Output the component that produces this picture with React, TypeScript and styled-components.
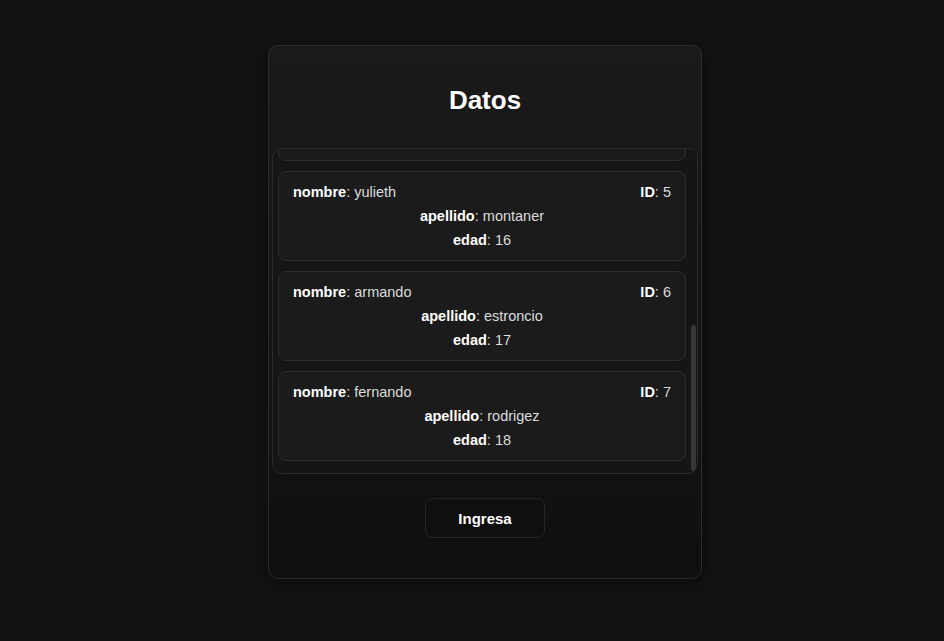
import React, { useLayoutEffect, useRef, useState } from 'react'
import styled, { createGlobalStyle } from 'styled-components'


const people: Person[] = [
    { id: 1, nombre: 'carlos', apellido: 'perez', edad: 12 },
    { id: 2, nombre: 'maria', apellido: 'gomez', edad: 13 },
    { id: 3, nombre: 'andres', apellido: 'lopez', edad: 14 },
    { id: 4, nombre: 'laura', apellido: 'martinez', edad: 15 },
    { id: 5, nombre: 'yulieth', apellido: 'montaner', edad: 16 },
    { id: 6, nombre: 'armando', apellido: 'estroncio', edad: 17 },
    { id: 7, nombre: 'fernando', apellido: 'rodrigez', edad: 18 },
]

export default function App(): JSX.Element {

    const listRef = useRef<HTMLDivElement>(null)
    const [thumb, setThumb] = useState({ top: 0, height: 0 })

    const updateThumb = () => {
        const el = listRef.current
        if (!el) return
        const track = el.clientHeight - 4
        const height = Math.max(20, track * el.clientHeight / el.scrollHeight)
        const top = 2 + (track - height) * el.scrollTop / Math.max(1, el.scrollHeight - el.clientHeight)
        setThumb({ top, height })
    }

    useLayoutEffect(() => {
        const el = listRef.current
        if (el) el.scrollTop = el.scrollHeight
        updateThumb()
    }, [])

    return (
        <>
            <GlobalStyle/>
            <Page>
                <Card>
                    <Title>Datos</Title>
                    <ListFrame>
                        <List ref={listRef} onScroll={updateThumb}>
                            {people.map(p => (
                                <Item key={p.id}>
                                    <TopRow>
                                        <span><Label>nombre</Label>: {p.nombre}</span>
                                        <span><Label>ID</Label>: {p.id}</span>
                                    </TopRow>
                                    <Row><Label>apellido</Label>: {p.apellido}</Row>
                                    <Row><Label>edad</Label>: {p.edad}</Row>
                                </Item>
                            ))}
                        </List>
                        <Thumb style={{ top: thumb.top, height: thumb.height }}/>
                    </ListFrame>
                    <Button>Ingresa</Button>
                </Card>
            </Page>
        </>
    )
}


interface Person {
    id: number
    nombre: string
    apellido: string
    edad: number
}

const GlobalStyle = createGlobalStyle`
    html, body {
        margin: 0;
        padding: 0;
        background: #121212;
        font-family: "Liberation Sans", Arial, sans-serif;
        color: #fff;
    }
    * {
        box-sizing: border-box;
    }
`

const Page = styled.div`
    min-height: 641px;
    display: flex;
    justify-content: center;
    align-items: flex-start;
    padding: 45px 0 0 26px;
`

const Card = styled.div`
    width: 434px;
    border: 1px solid #2c2c2c;
    border-radius: 10px;
    background: linear-gradient(180deg, #1a1a1a 0%, #141414 55%, #0f0f0f 100%);
    box-shadow: 0 4px 14px rgba(0, 0, 0, 0.45);
    display: flex;
    flex-direction: column;
    align-items: center;
    padding: 39px 0 40px;
`

const Title = styled.h1`
    margin: 0 0 33px;
    font-size: 26px;
    line-height: 30px;
    font-weight: 700;
    color: #fff;
`

const ListFrame = styled.div`
    position: relative;
    width: 426px;
    height: 326px;
    border: 1px solid #2a2a2a;
    border-radius: 10px;
    background: #151515;
    overflow: hidden;
`

const List = styled.div`
    height: 100%;
    overflow-y: scroll;
    scrollbar-width: none;
    padding: 10px 11px 12px 5px;
    display: flex;
    flex-direction: column;
    gap: 10px;

    &::-webkit-scrollbar {
        display: none;
    }
`

const Thumb = styled.div`
    position: absolute;
    right: 1px;
    width: 5px;
    border-radius: 3px;
    background: #363636;
    pointer-events: none;
`

const Item = styled.div`
    flex: none;
    height: 90px;
    border: 1px solid #2d2d2d;
    border-radius: 8px;
    background: #1b1b1b;
    padding: 12px 14px;
    display: flex;
    flex-direction: column;
    gap: 8px;
    font-size: 14.5px;
    line-height: 16px;
    color: #dcdcdc;
`

const TopRow = styled.div`
    display: flex;
    justify-content: space-between;
`

const Row = styled.div`
    text-align: center;
`

const Label = styled.b`
    color: #fff;
    font-weight: 700;
`

const Button = styled.button`
    margin-top: 24px;
    width: 120px;
    height: 40px;
    border: 1px solid #262626;
    border-radius: 8px;
    background: #0f0f0f;
    color: #fff;
    font-family: "Liberation Sans", Arial, sans-serif;
    font-size: 15px;
    font-weight: 700;
    cursor: pointer;
`
